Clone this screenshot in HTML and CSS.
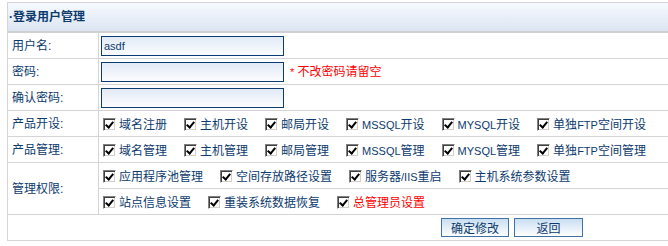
FILE: index.html
```html
<!DOCTYPE html>
<html lang="zh-CN">
<head>
    <meta charset="UTF-8">
    <meta name="viewport" content="width=device-width, initial-scale=1.0">
    <title>登录用户管理</title>
    <link rel="stylesheet" href="styles.css">
</head>
<body>

<form class="userForm">
<table class="tb">
    <tr>
        <th colspan="2" class="tbTitle">·登录用户管理</th>
    </tr>
    <tr>
        <td class="lbl">用户名:</td>
        <td class="val"><input class="ipt" type="text" value="asdf"></td>
    </tr>
    <tr>
        <td class="lbl">密码:</td>
        <td class="val"><input class="ipt" type="password"><span class="tip"><span class="en">*</span> 不改密码请留空</span></td>
    </tr>
    <tr>
        <td class="lbl">确认密码:</td>
        <td class="val"><input class="ipt" type="password"></td>
    </tr>
    <tr>
        <td class="lbl">产品开设:</td>
        <td class="val">
            <div class="ckRow">
                <label class="ck"><input type="checkbox" checked>域名注册</label>
                <label class="ck"><input type="checkbox" checked>主机开设</label>
                <label class="ck"><input type="checkbox" checked>邮局开设</label>
                <label class="ck"><input type="checkbox" checked><span class="en">MSSQL</span>开设</label>
                <label class="ck"><input type="checkbox" checked><span class="en">MYSQL</span>开设</label>
                <label class="ck"><input type="checkbox" checked>单独<span class="en">FTP</span>空间开设</label>
            </div>
        </td>
    </tr>
    <tr>
        <td class="lbl">产品管理:</td>
        <td class="val">
            <div class="ckRow">
                <label class="ck"><input type="checkbox" checked>域名管理</label>
                <label class="ck"><input type="checkbox" checked>主机管理</label>
                <label class="ck"><input type="checkbox" checked>邮局管理</label>
                <label class="ck"><input type="checkbox" checked><span class="en">MSSQL</span>管理</label>
                <label class="ck"><input type="checkbox" checked><span class="en">MYSQL</span>管理</label>
                <label class="ck"><input type="checkbox" checked>单独<span class="en">FTP</span>空间管理</label>
            </div>
        </td>
    </tr>
    <tr>
        <td class="lbl">管理权限:</td>
        <td class="val sub">
            <div class="ckRow line">
                <label class="ck"><input type="checkbox" checked>应用程序池管理</label>
                <label class="ck"><input type="checkbox" checked>空间存放路径设置</label>
                <label class="ck"><input type="checkbox" checked>服务器<span class="en">/IIS</span>重启</label>
                <label class="ck"><input type="checkbox" checked>主机系统参数设置</label>
            </div>
            <div class="ckRow">
                <label class="ck"><input type="checkbox" checked>站点信息设置</label>
                <label class="ck"><input type="checkbox" checked>重装系统数据恢复</label>
                <label class="ck red"><input type="checkbox" checked>总管理员设置</label>
            </div>
        </td>
    </tr>
    <tr>
        <td colspan="2" class="btnCell">
            <div class="btns">
                <button type="submit" class="btn btnOk">确定修改</button>
                <button type="button" class="btn btnBack">返回</button>
            </div>
        </td>
    </tr>
</table>
</form>

</body>
</html>
```

FILE: styles.css
```css
:root{
    --text-color: #0d3b6e;
    --line: #d4d4d4;
}

*{
    box-sizing: border-box;
}

html, body{
    overflow: hidden;
}

body{
    margin: 0;
    background: #fff;
    font-family: "Liberation Sans", "Noto Sans CJK SC", sans-serif;
    font-size: 12px;
    color: var(--text-color);
}

.en{
    font-family: "Liberation Sans", sans-serif;
    font-size: 11px;
}

.userForm{
    margin: 2px 0 0 7px;
}

.tb{
    width: 1010px;
    border-spacing: 0;
    border-top: 1px solid var(--line);
    border-left: 1px solid var(--line);
}

.tb th, .tb td{
    padding: 0;
    border-right: 1px solid var(--line);
    border-bottom: 1px solid var(--line);
    height: 26px;
    line-height: 14px;
}

.tbTitle{
    text-align: left;
    font-weight: bold;
    padding-left: 1px !important;
    height: 30px !important;
    border-bottom: 2px solid #d0d0d0 !important;
    background: linear-gradient(#f6f9ff, #dbe5f1);
}

.lbl{
    width: 91px;
    padding-left: 4px !important;
    padding-top: 1px !important;
}

.val{
    padding-left: 2px !important;
}

.ipt{
    width: 183px;
    height: 20px;
    margin: 0;
    vertical-align: middle;
    border: 1px solid #0c3d72;
    background: linear-gradient(#e2eaf6, #fbfcfe);
    font-family: "Liberation Sans", sans-serif;
    font-size: 11px;
    color: var(--text-color);
    padding: 1px 2px 0;
    outline: none;
}

.tip{
    color: #f00;
    margin-left: 6px;
    vertical-align: middle;
}

.ckRow{
    display: flex;
    align-items: center;
    height: 25px;
    padding: 2px 0 0 2px;
}

.sub .line{
    height: 26px;
    border-bottom: 1px solid var(--line);
    margin-left: -2px;
    padding-left: 4px;
}

.ck{
    display: inline-flex;
    align-items: center;
    margin-right: 17px;
    white-space: nowrap;
}

.ck input{
    appearance: none;
    -webkit-appearance: none;
    position: relative;
    width: 13px;
    height: 13px;
    margin: 0 3px 0 0;
    border: 1px solid;
    border-color: #808080 #fff #fff #808080;
    box-shadow: inset 1px 1px #404040, inset -1px -1px #d4d0c8;
    background: #fff;
}

.ck input:checked::after{
    content: "";
    position: absolute;
    left: 3px;
    top: 1px;
    width: 3px;
    height: 6px;
    border: solid #000;
    border-width: 0 2px 2px 0;
    transform: rotate(40deg);
}

.red{
    color: #f00;
}

.btnCell{
    height: 26px;
}

.btns{
    display: flex;
    justify-content: center;
    gap: 5px;
}

.btn{
    height: 19px;
    padding: 0;
    border: 1px solid #3f73a8;
    background: linear-gradient(#c9def1, #eef5fb 70%, #fff);
    color: var(--text-color);
    font-family: "Noto Sans CJK SC", sans-serif;
    font-size: 12px;
    line-height: 16px;
}

.btnOk{
    width: 68px;
}

.btnBack{
    width: 69px;
}
```
